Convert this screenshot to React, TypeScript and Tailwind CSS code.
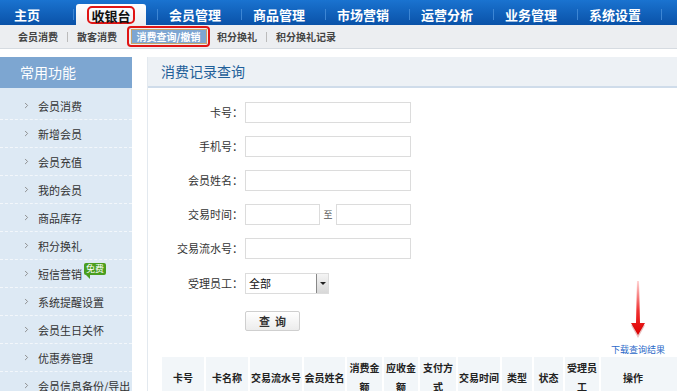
import { ChevronRight } from 'lucide-react';

const cn = '"Noto Sans CJK SC", "Liberation Sans", sans-serif';

const topTabs = ['主页', '收银台', '会员管理', '商品管理', '市场营销', '运营分析', '业务管理', '系统设置'];

const sideItems = [
  '会员消费',
  '新增会员',
  '会员充值',
  '我的会员',
  '商品库存',
  '积分换礼',
  '短信营销',
  '系统提醒设置',
  '会员生日关怀',
  '优惠券管理',
  '会员信息备份/导出',
];

const columns: { label: string; w: number }[] = [
  { label: '卡号', w: 42 },
  { label: '卡名称', w: 44 },
  { label: '交易流水号', w: 54 },
  { label: '会员姓名', w: 43 },
  { label: '消费金额', w: 37 },
  { label: '应收金额', w: 36 },
  { label: '支付方式', w: 38 },
  { label: '交易时间', w: 44 },
  { label: '类型', w: 32 },
  { label: '状态', w: 31 },
  { label: '受理员工', w: 36 },
  { label: '操作', w: 66 },
];

function Field({ label, children }: { label: string; children: React.ReactNode }) {
  return (
    <div className="flex items-center h-[21px]">
      <span className="w-[97px] pr-[2px] text-right text-[11px] text-[#333]">{label}：</span>
      {children}
    </div>
  );
}

function TextInput({ w = 166 }: { w?: number }) {
  return <div className="h-[21px] bg-white border border-[#dcdcdc]" style={{ width: w }} />;
}

export default function App() {
  return (
    <div className="w-[677px] h-[391px] overflow-hidden bg-white" style={{ fontFamily: cn }}>
      {/* top nav */}
      <div className="h-[25px] flex items-end bg-gradient-to-b from-[#1a73d0] to-[#0a52a8]">
        <div className="flex items-end -ml-[8px]">
          {topTabs.map((t, i) => (
            <div key={t} className="flex items-end">
              {i === 1 ? (
                <div className="w-[70px] h-[21px] rounded-t-[3px] bg-gradient-to-b from-white to-[#eceef1] flex items-center justify-center">
                  <span className="px-[2px] h-[18px] leading-[16px] border-2 border-[#e01515] rounded-[5px] text-[13px] font-bold text-[#111]">
                    收银台
                  </span>
                </div>
              ) : (
                <div className="w-[70px] h-[21px] flex items-center justify-center text-[13px] font-bold text-white">
                  {t}
                </div>
              )}
              <div className="w-[14px] h-[21px] flex items-center">
                <div className="ml-[11px] w-px h-[11px] bg-[#0b4380] border-r border-[#3d86d4]" />
              </div>
            </div>
          ))}
        </div>
      </div>

      {/* sub nav */}
      <div className="h-[24px] bg-[#eceef1] border-b border-[#d6dbe1] flex items-center text-[10px] font-bold text-[#444]">
        <span className="ml-[18px]">会员消费</span>
        <span className="mx-[9px] w-px h-[10px] bg-[#bbb]" />
        <span>散客消费</span>
        <div className="ml-[10px] h-[21px] w-[83px] border-2 border-[#e01515] rounded-[4px] flex items-center justify-center">
          <div className="w-[76px] h-[15px] bg-[#7ea6d2] border border-[#c9a46a] text-white leading-[13px] text-center">
            消费查询/撤销
          </div>
        </div>
        <span className="ml-[7px]">积分换礼</span>
        <span className="mx-[9px] w-px h-[10px] bg-[#bbb]" />
        <span>积分换礼记录</span>
      </div>

      <div className="flex mt-[8px]">
        {/* sidebar */}
        <div className="w-[132px] shrink-0 bg-[#dde9f4]">
          <div className="h-[31px] bg-[#7da6d1] flex items-center pl-[20px] text-[14px] text-white">常用功能</div>
          <div className="pt-[4px]">
            {sideItems.map((s) => (
              <div
                key={s}
                className="h-[28px] flex items-center border-b border-dashed border-[#f3f7fb] text-[11px] text-[#333]"
              >
                <ChevronRight className="ml-[22px] w-[9px] h-[9px] text-[#888]" strokeWidth={2.5} />
                <span className="ml-[7px] mt-[2px]">{s}</span>
                {s === '短信营销' && (
                  <span className="relative ml-[2px] -mt-[10px] h-[12px] px-[2px] bg-[#4a9e1f] rounded-[2px] text-[9px] leading-[12px] text-white">
                    免费
                    <span className="absolute left-[2px] -bottom-[4px] w-0 h-0 border-l-[4px] border-r-0 border-t-[4px] border-l-transparent border-t-[#4a9e1f]" />
                  </span>
                )}
              </div>
            ))}
          </div>
        </div>

        {/* main panel */}
        <div className="ml-[15px] flex-1 border-l border-[#e3e9ef]">
          <div className="h-[31px] bg-[#edf1f5] border-b-2 border-[#cfdcea] flex items-center pl-[13px] text-[14px] text-[#1f5f99]">
            消费记录查询
          </div>

          <div className="pt-[14px] flex flex-col gap-[13px]">
            <Field label="卡号">
              <TextInput />
            </Field>
            <Field label="手机号">
              <TextInput />
            </Field>
            <Field label="会员姓名">
              <TextInput />
            </Field>
            <Field label="交易时间">
              <TextInput w={75} />
              <span className="w-[16px] text-center text-[9px] text-[#555]">至</span>
              <TextInput w={75} />
            </Field>
            <Field label="交易流水号">
              <TextInput />
            </Field>
            <div className="mt-[1px]">
              <Field label="受理员工">
                <div className="w-[84px] h-[21px] bg-white border border-[#dcdcdc] flex items-center">
                  <span className="flex-1 pl-[3px] text-[11px] text-[#111]">全部</span>
                  <div className="w-[12px] h-[19px] bg-gradient-to-b from-[#f4f4f4] to-[#d8d8d8] border-l border-[#888] flex items-center justify-center">
                    <div className="w-0 h-0 border-l-[3px] border-r-[3px] border-t-[3px] border-l-transparent border-r-transparent border-t-[#222]" />
                  </div>
                </div>
              </Field>
            </div>
          </div>

          <div className="mt-[17px] ml-[97px] w-[55px] h-[20px] border border-[#cfcfcf] rounded-[2px] bg-gradient-to-b from-white to-[#ececec] flex items-center justify-center text-[11px] font-bold text-[#333] tracking-[5px] pl-[5px]">
            查询
          </div>

          <div className="relative ml-[14px] w-[503px] mt-[14px] h-[10px] flex justify-end">
            <span className="text-[9px] leading-[10px] text-[#2d6ac9]">下载查询结果</span>
            <svg className="absolute right-[17px] -top-[66px]" width="20" height="62" viewBox="0 0 20 62">
              <defs>
                <linearGradient id="ag" x1="0" y1="0" x2="0" y2="1">
                  <stop offset="0" stopColor="#ffd6d6" />
                  <stop offset="0.55" stopColor="#f03030" />
                  <stop offset="1" stopColor="#e00000" />
                </linearGradient>
              </defs>
              <path d="M9 2 L11 2 L12 44 L17 44 L10 56 L3 44 L8 44 Z" fill="url(#ag)" />
              <path d="M4 46 L10 57 L16 46" fill="none" stroke="#a00" strokeOpacity="0.25" strokeWidth="2" />
            </svg>
          </div>

          <div className="ml-[14px] mt-[2px] flex bg-[#f2f6f9]">
            {columns.map((c, i) => (
              <div
                key={c.label}
                className={`h-[40px] flex items-center justify-center text-center text-[10px] font-bold leading-[19px] text-[#222] ${
                  i > 0 ? 'border-l-2 border-white' : ''
                }`}
                style={{ width: c.w }}
              >
                {c.label}
              </div>
            ))}
          </div>
        </div>
      </div>
    </div>
  );
}
